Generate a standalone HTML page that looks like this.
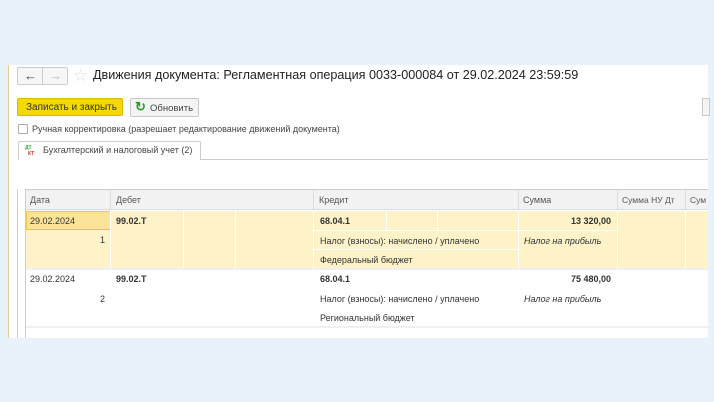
<!DOCTYPE html>
<html><head><meta charset="utf-8"><style>
*{margin:0;padding:0;box-sizing:border-box}
body{width:714px;height:402px;background:#e8f2fb;position:relative;overflow:hidden;font-family:"Liberation Sans",Arial,sans-serif;color:#333}
.a{position:absolute}
.panel{left:8px;top:65px;width:700px;height:273px;background:#fff;border-left:1px solid #d8cf9a}
.t{font-size:9px;white-space:nowrap}
.r{text-align:right}
</style></head><body>
<div class="a panel"></div>
<div class="a" style="left:17px;top:189px;width:1px;height:149px;background:#ccc"></div>
<!-- nav -->
<div class="a" style="left:17px;top:67px;width:51px;height:18px;border:1px solid #ccc;border-radius:2px;background:#f6f6f6"></div>
<div class="a" style="left:42px;top:68px;width:1px;height:16px;background:#ccc"></div>
<div class="a t" style="left:24px;top:68px;font-size:13px;color:#444">&#8592;</div>
<div class="a t" style="left:49px;top:68px;font-size:13px;color:#bbb">&#8594;</div>
<div class="a t" style="left:73px;top:66px;font-size:17px;color:#ddd">&#9734;</div>
<div class="a t" style="left:93px;top:68px;font-size:12.6px;color:#222">Движения документа: Регламентная операция 0033-000084 от 29.02.2024 23:59:59</div>
<!-- buttons -->
<div class="a t" style="left:17px;top:98px;width:106px;height:18px;background:#f5d800;border:1px solid #d8b800;border-radius:2px;color:#333;padding:3px 0 0 8px;font-size:10px">Записать и закрыть</div>
<div class="a t" style="left:130px;top:98px;width:69px;height:19px;background:#f4f4f4;border:1px solid #c8c8c8;border-radius:2px;color:#444;padding:4px 0 0 19px;font-size:9.5px">Обновить</div>
<div class="a t" style="left:135px;top:99px;font-size:13px;color:#2a9a2a;font-weight:bold">&#8635;</div>
<div class="a" style="left:702px;top:98px;width:8px;height:18px;background:#f4f4f4;border:1px solid #c8c8c8"></div>
<div class="a" style="left:18px;top:124px;width:10px;height:10px;border:1px solid #aaa;border-radius:1px"></div>
<div class="a t" style="left:32px;top:124px;color:#444">Ручная корректировка (разрешает редактирование движений документа)</div>
<!-- tab -->
<div class="a" style="left:19px;top:159px;width:689px;height:1px;background:#ccc"></div>
<div class="a" style="left:18px;top:141px;width:183px;height:19px;background:#fff;border:1px solid #ccc;border-bottom:none;border-radius:2px 2px 0 0"></div>
<div class="a" style="left:25px;top:145px;font-size:5px;color:#3a3;font-weight:bold">ДТ</div>
<div class="a" style="left:28px;top:151px;font-size:5px;color:#d33;font-weight:bold">КТ</div>
<div class="a t" style="left:43px;top:145px;color:#444">Бухгалтерский и налоговый учет (2)</div>
<!-- table -->
<div class="a" style="left:25px;top:189px;width:683px;height:149px;border-left:1px solid #ccc;border-top:1px solid #ccc;background:#fff"></div>
<div class="a" style="left:26px;top:190px;width:682px;height:20px;background:#f2f2f2;border-bottom:1px solid #ddd"></div>
<div class="a" style="left:110px;top:190px;width:1px;height:20px;background:#ddd"></div>
<div class="a" style="left:313px;top:190px;width:1px;height:20px;background:#ddd"></div>
<div class="a" style="left:518px;top:190px;width:1px;height:20px;background:#ddd"></div>
<div class="a" style="left:617px;top:190px;width:1px;height:20px;background:#ddd"></div>
<div class="a" style="left:685px;top:190px;width:1px;height:20px;background:#ddd"></div>
<div class="a t" style="left:30px;top:195px;color:#555">Дата</div>
<div class="a t" style="left:116px;top:195px;color:#555">Дебет</div>
<div class="a t" style="left:319px;top:195px;color:#555">Кредит</div>
<div class="a t" style="left:523px;top:195px;color:#555">Сумма</div>
<div class="a t" style="left:622px;top:195px;color:#555;font-size:8.5px">Сумма НУ Дт</div>
<div class="a t" style="left:690px;top:195px;color:#555;font-size:8.5px">Сум</div>
<!-- row1 -->
<div class="a" style="left:26px;top:211px;width:682px;height:57px;background:#fdf2c8"></div>
<div class="a" style="left:26px;top:211px;width:85px;height:19px;background:#fbe49a;border:1px solid #f0c840"></div>
<div class="a" style="left:110px;top:211px;width:1px;height:57px;background:#fff"></div>
<div class="a" style="left:183px;top:211px;width:1px;height:57px;background:#fff"></div>
<div class="a" style="left:235px;top:211px;width:1px;height:57px;background:#fff"></div>
<div class="a" style="left:313px;top:211px;width:1px;height:57px;background:#fff"></div>
<div class="a" style="left:386px;top:211px;width:1px;height:19px;background:#fff"></div>
<div class="a" style="left:437px;top:211px;width:1px;height:19px;background:#fff"></div>
<div class="a" style="left:518px;top:211px;width:1px;height:57px;background:#fff"></div>
<div class="a" style="left:617px;top:211px;width:1px;height:57px;background:#fff"></div>
<div class="a" style="left:685px;top:211px;width:1px;height:57px;background:#fff"></div>
<div class="a" style="left:314px;top:230px;width:304px;height:1px;background:#fff"></div>
<div class="a" style="left:314px;top:249px;width:204px;height:1px;background:#fff"></div>
<div class="a" style="left:26px;top:268px;width:682px;height:2px;background:#f0f0f0"></div>
<div class="a t" style="left:30px;top:216px">29.02.2024</div>
<div class="a t r" style="left:60px;width:45px;top:235px">1</div>
<div class="a t" style="left:116px;top:216px;font-weight:bold">99.02.Т</div>
<div class="a t" style="left:320px;top:216px;font-weight:bold">68.04.1</div>
<div class="a t" style="left:320px;top:236px">Налог (взносы): начислено / уплачено</div>
<div class="a t" style="left:320px;top:255px">Федеральный бюджет</div>
<div class="a t r" style="left:540px;width:71px;top:216px;font-weight:bold">13 320,00</div>
<div class="a t" style="left:524px;top:236px;font-style:italic">Налог на прибыль</div>
<!-- row2 -->
<div class="a t" style="left:30px;top:274px">29.02.2024</div>
<div class="a t r" style="left:60px;width:45px;top:294px">2</div>
<div class="a t" style="left:116px;top:274px;font-weight:bold">99.02.Т</div>
<div class="a t" style="left:320px;top:274px;font-weight:bold">68.04.1</div>
<div class="a t" style="left:320px;top:294px">Налог (взносы): начислено / уплачено</div>
<div class="a t" style="left:320px;top:313px">Региональный бюджет</div>
<div class="a t r" style="left:540px;width:71px;top:274px;font-weight:bold">75 480,00</div>
<div class="a t" style="left:524px;top:294px;font-style:italic">Налог на прибыль</div>
<div class="a" style="left:26px;top:326px;width:682px;height:2px;background:#f0f0f0"></div>
</body></html>
